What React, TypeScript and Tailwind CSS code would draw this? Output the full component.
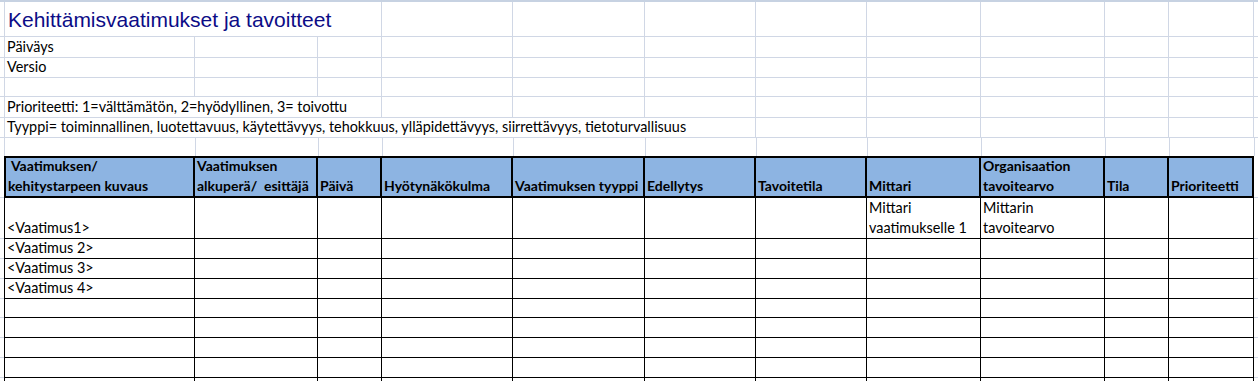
import React from 'react'

const GRID = 'grid grid-cols-[4px_191px_123px_64px_131px_132px_111px_111px_114px_124px_64px_85px_4px]'
const LIGHT = 'border-[#d0d7e5]'

const headers: string[][] = [
  ['\u00a0Vaatimuksen/', 'kehitystarpeen kuvaus'],
  ['Vaatimuksen', 'alkuperä/\u00a0 esittäjä'],
  ['Päivä'],
  ['Hyötynäkökulma'],
  ['Vaatimuksen tyyppi'],
  ['Edellytys'],
  ['Tavoitetila'],
  ['Mittari'],
  ['Organisaation', 'tavoitearvo'],
  ['Tila'],
  ['Prioriteetti'],
]

// data rows under the header
const dataRows: { h: string; cells: Record<number, string[]>; top?: number[] }[] = [
  {
    h: 'h-[40px]',
    cells: { 0: ['<Vaatimus1>'], 7: ['Mittari', 'vaatimukselle 1'], 8: ['Mittarin', 'tavoitearvo'] },
    top: [7, 8],
  },
  { h: 'h-[20px]', cells: { 0: ['<Vaatimus 2>'] } },
  { h: 'h-[20px]', cells: { 0: ['<Vaatimus 3>'] } },
  { h: 'h-[20px]', cells: { 0: ['<Vaatimus 4>'] } },
  { h: 'h-[20px]', cells: {} },
  { h: 'h-[20px]', cells: {} },
  { h: 'h-[20px]', cells: {} },
  { h: 'h-[20px]', cells: {} },
  { h: 'h-[20px]', cells: {} },
]

function SheetRow({ h, children }: { h: string; children?: React.ReactNode }) {
  return (
    <div className={`${GRID} ${h}`}>
      <div className={`border-b ${LIGHT}`} />
      {children}
      <div className={`border-b ${LIGHT}`} />
    </div>
  )
}

function Cell({ span = 1, first, children }: { span?: number; first?: boolean; children?: React.ReactNode }) {
  const spans: Record<number, string> = { 1: 'col-span-1', 3: 'col-span-3', 6: 'col-span-6' }
  return (
    <div
      className={`${spans[span]} flex items-end border-r border-b ${LIGHT} ${first ? 'border-l' : ''} pl-[2px] whitespace-nowrap overflow-visible`}
    >
      {children}
    </div>
  )
}

function blanks(n: number) {
  return Array.from({ length: n }, (_, i) => <Cell key={i} />)
}

export default function App() {
  return (
    <div className="w-[1258px] h-[381px] overflow-hidden bg-white text-black font-['Lato','Open_Sans',sans-serif] text-[14.4px] leading-[20px]">
      <div className="h-[2px] bg-[#c7d2e2]" />

      <SheetRow h="h-[35px]">
        <Cell span={3} first>
          <span className="font-['Liberation_Sans',Arial,sans-serif] text-[21px] leading-[26px] pb-[3px] pl-[1px] text-[#0c0c86]">
            Kehittämisvaatimukset ja tavoitteet
          </span>
        </Cell>
        {blanks(8)}
      </SheetRow>

      <SheetRow h="h-[20px]">
        <Cell first>Päiväys</Cell>
        {blanks(10)}
      </SheetRow>
      <SheetRow h="h-[20px]">
        <Cell first>Versio</Cell>
        {blanks(10)}
      </SheetRow>
      <SheetRow h="h-[20px]">
        <Cell first />
        {blanks(10)}
      </SheetRow>
      <SheetRow h="h-[20px]">
        <Cell span={3} first>
          Prioriteetti: 1=välttämätön, 2=hyödyllinen, 3= toivottu
        </Cell>
        {blanks(8)}
      </SheetRow>
      <SheetRow h="h-[20px]">
        <Cell span={6} first>
          Tyyppi= toiminnallinen, luotettavuus, käytettävyys, tehokkuus, ylläpidettävyys, siirrettävyys, tietoturvallisuus
        </Cell>
        {blanks(5)}
      </SheetRow>
      <div className={`${GRID} h-[19px]`}>
        <div />
        <div className={`border-l ${LIGHT}`} />
        {Array.from({ length: 10 }, (_, i) => (
          <div key={i} className={`border-l ${LIGHT} first:border-0`} />
        ))}
        <div className={`border-l ${LIGHT}`} />
      </div>

      {/* table header */}
      <SheetRow h="h-[42px]">
        {headers.map((lines, i) => (
          <div
            key={i}
            className={`flex flex-col justify-end bg-[#8db4e2] border-t-2 border-b-2 border-r-2 border-black ${
              i === 0 ? 'border-l-2' : ''
            } pl-[2px] font-bold text-[14px] whitespace-nowrap overflow-hidden`}
          >
            {lines.map((l) => (
              <span key={l}>{l}</span>
            ))}
          </div>
        ))}
      </SheetRow>

      {dataRows.map((row, r) => (
        <SheetRow key={r} h={row.h}>
          {headers.map((_, i) => {
            const lines = row.cells[i]
            const top = row.top?.includes(i)
            return (
              <div
                key={i}
                className={`flex flex-col ${top ? 'justify-start' : 'justify-end'} border-r border-b border-black ${
                  i === 0 ? 'border-l' : ''
                } pl-[2px] whitespace-nowrap`}
              >
                {lines?.map((l) => (
                  <span key={l}>{l}</span>
                ))}
              </div>
            )
          })}
        </SheetRow>
      ))}
    </div>
  )
}
